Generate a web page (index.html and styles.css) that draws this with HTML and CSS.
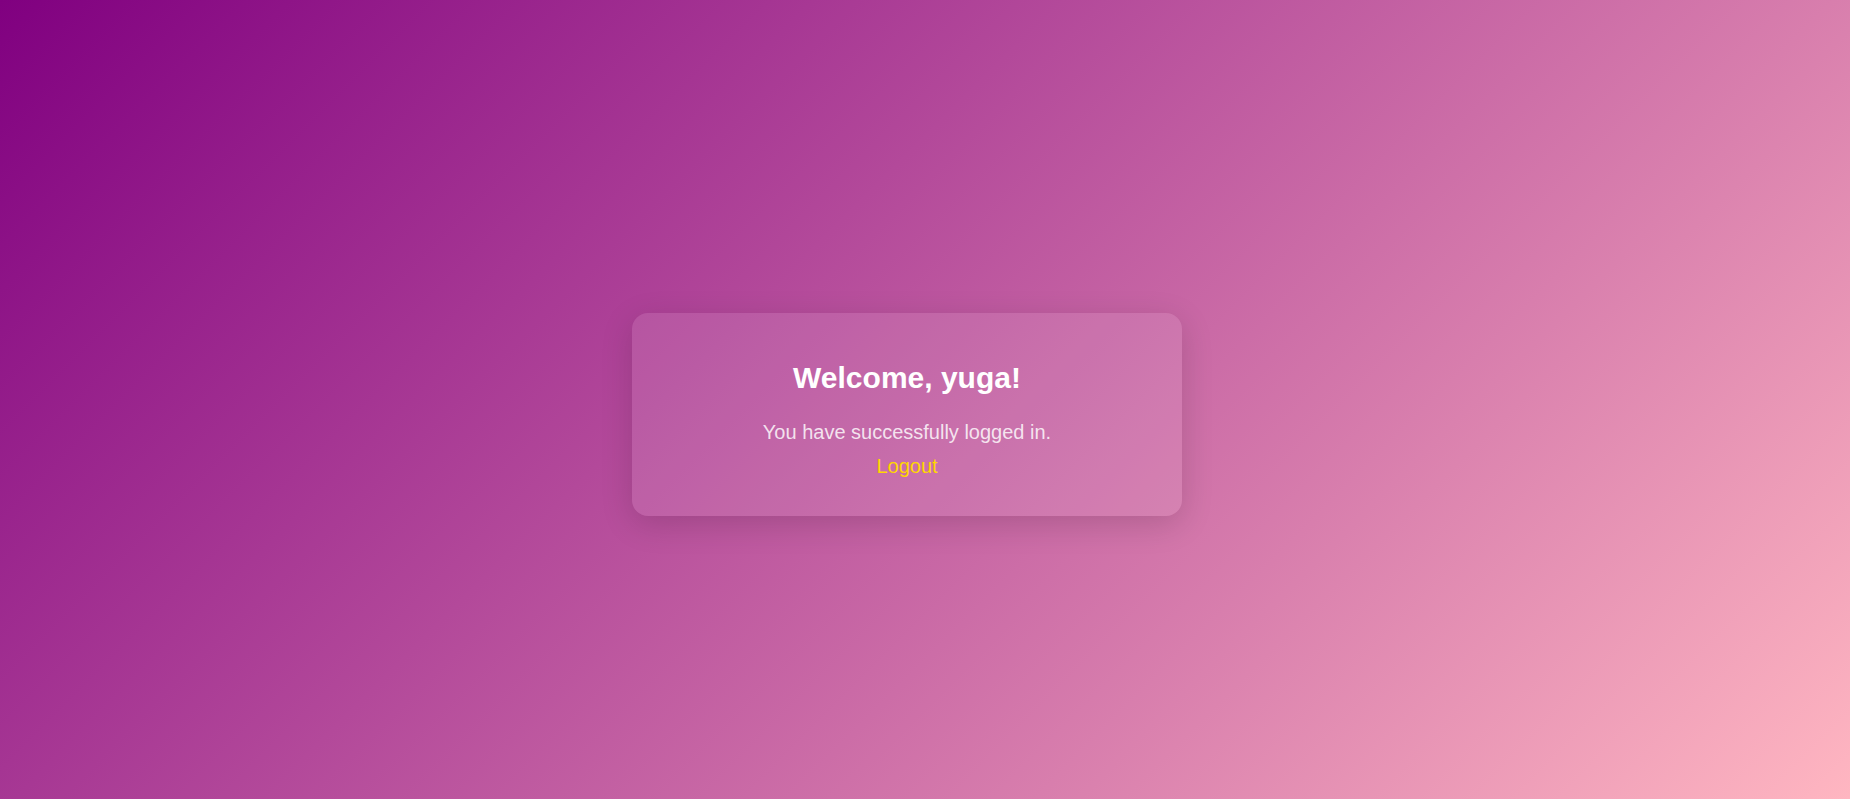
FILE: index.html
```html
<!DOCTYPE html>
<html lang="en">
<head>
<meta charset="utf-8">
<title>Welcome</title>
<link rel="stylesheet" href="styles.css">
</head>
<body>
<main class="page">
  <section class="card">
    <h1 class="card-title">Welcome, yuga!</h1>
    <p class="card-text">You have successfully logged in.</p>
    <a class="card-link" href="#">Logout</a>
  </section>
</main>
</body>
</html>
```
FILE: styles.css
```css
html, body {
  margin: 0;
  padding: 0;
  height: 100%;
}
body {
  font-family: "Liberation Sans", Arial, sans-serif;
  background: linear-gradient(135deg, #800080 0%, #ffb6c1 100%);
  color: #fff;
  overflow: hidden;
}
.page {
  box-sizing: border-box;
  height: 100vh;
  display: flex;
  align-items: center;
  justify-content: center;
  padding: 30px 36px 0 0;
}
.card {
  box-sizing: border-box;
  width: 550px;
  padding: 47px 40px 38px;
  border-radius: 16px;
  background: rgba(255, 255, 255, 0.1);
  box-shadow: 0 8px 32px rgba(0, 0, 0, 0.15);
  display: flex;
  flex-direction: column;
  align-items: center;
  text-align: center;
}
.card-title {
  margin: 0 0 26px;
  font-size: 30px;
  line-height: 35px;
  font-weight: bold;
  color: #fff;
}
.card-text {
  margin: 0 0 11px;
  font-size: 20px;
  line-height: 23px;
  color: rgba(255, 255, 255, 0.82);
}
.card-link {
  font-size: 20px;
  line-height: 23px;
  color: #ffd700;
  text-decoration: none;
}
```
